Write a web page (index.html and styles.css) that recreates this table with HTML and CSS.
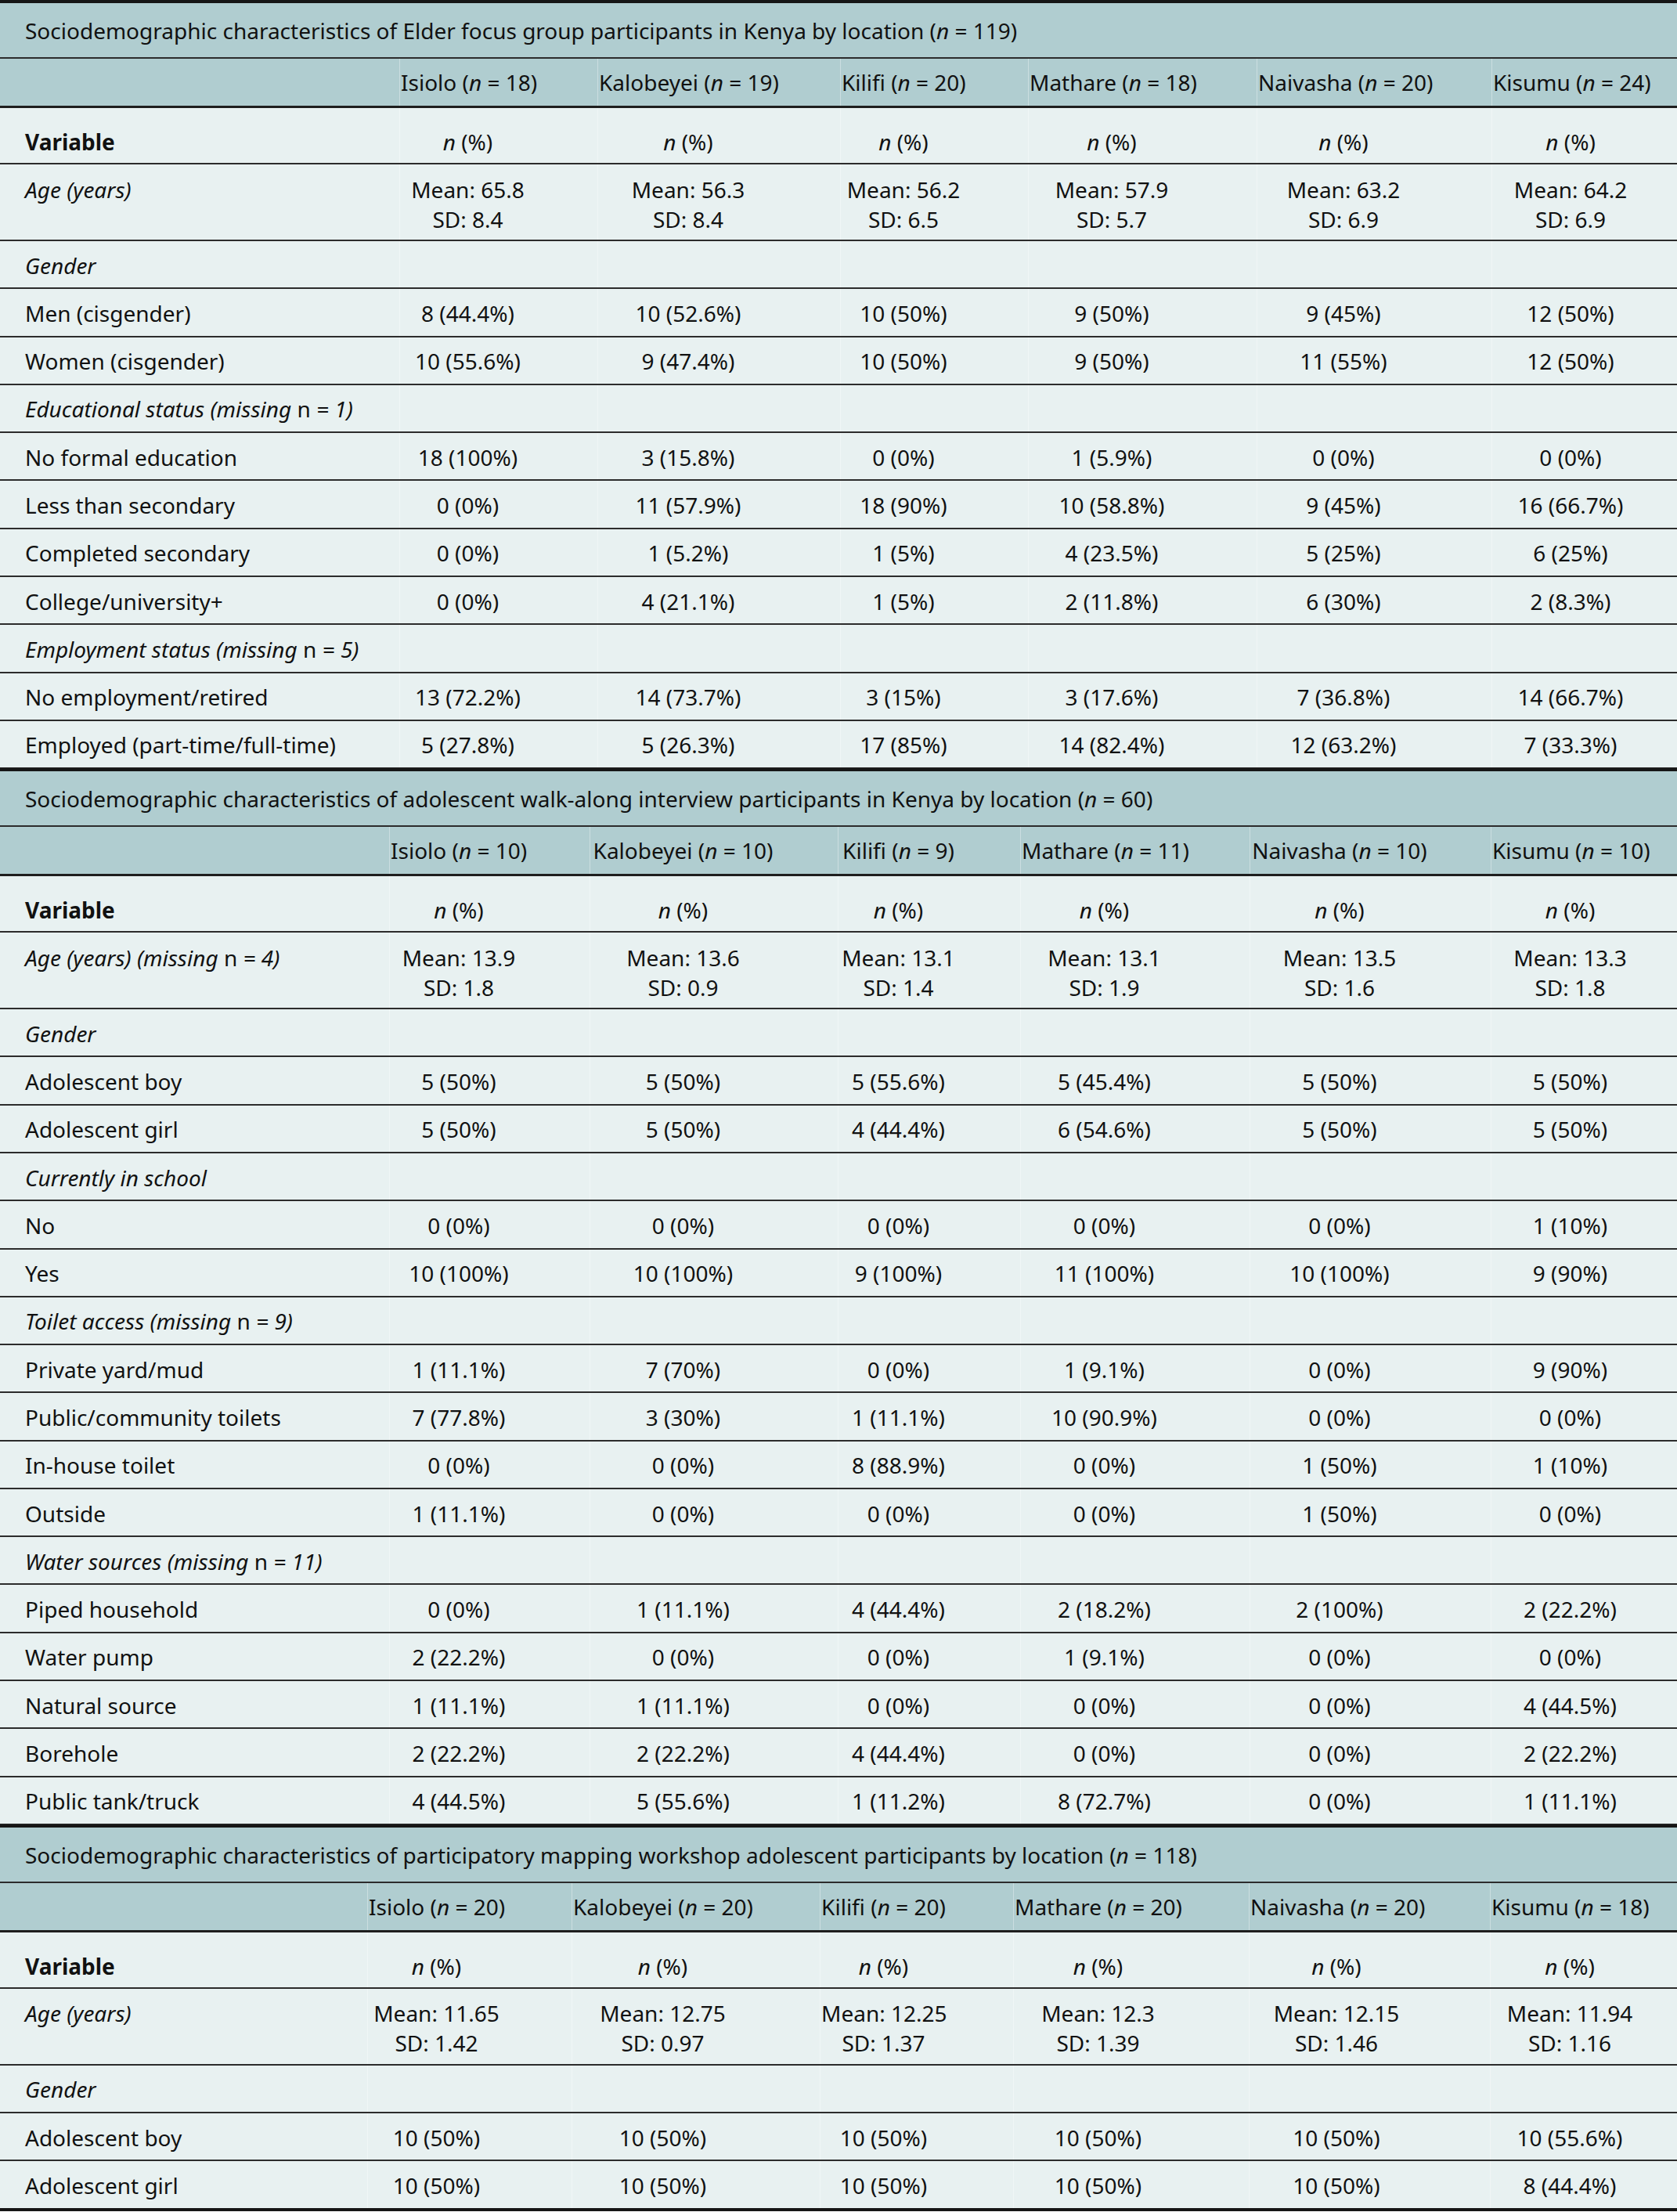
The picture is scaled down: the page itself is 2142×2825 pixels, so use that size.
FILE: index.html
```html
<!DOCTYPE html>
<html lang="en">
<head>
<meta charset="utf-8">
<title>Sociodemographic characteristics</title>
<link rel="stylesheet" href="styles.css">
</head>
<body>
<table class="tbl t1">
<colgroup><col class="k0"><col class="k1"><col class="k2"><col class="k3"><col class="k4"><col class="k5"><col class="k6"></colgroup>
<tr><td class="cap" colspan="7">Sociodemographic characteristics of Elder focus group participants in Kenya by location (<i>n</i> = 119)</td></tr>
<tr class="head"><th class="lab"></th><th>Isiolo (<i>n</i> = 18)</th><th>Kalobeyei (<i>n</i> = 19)</th><th>Kilifi (<i>n</i> = 20)</th><th>Mathare (<i>n</i> = 18)</th><th>Naivasha (<i>n</i> = 20)</th><th class="end">Kisumu (<i>n</i> = 24)</th></tr>
<tr class="var"><td class="lab"><b>Variable</b></td><td><i>n</i> (%)</td><td><i>n</i> (%)</td><td><i>n</i> (%)</td><td><i>n</i> (%)</td><td><i>n</i> (%)</td><td class="end"><i>n</i> (%)</td></tr>
<tr class="two"><td class="lab"><i>Age (years)</i></td><td>Mean: 65.8<br>SD: 8.4</td><td>Mean: 56.3<br>SD: 8.4</td><td>Mean: 56.2<br>SD: 6.5</td><td>Mean: 57.9<br>SD: 5.7</td><td>Mean: 63.2<br>SD: 6.9</td><td class="end">Mean: 64.2<br>SD: 6.9</td></tr>
<tr><td class="lab"><i>Gender</i></td><td></td><td></td><td></td><td></td><td></td><td class="end"></td></tr>
<tr><td class="lab">Men (cisgender)</td><td>8 (44.4%)</td><td>10 (52.6%)</td><td>10 (50%)</td><td>9 (50%)</td><td>9 (45%)</td><td class="end">12 (50%)</td></tr>
<tr><td class="lab">Women (cisgender)</td><td>10 (55.6%)</td><td>9 (47.4%)</td><td>10 (50%)</td><td>9 (50%)</td><td>11 (55%)</td><td class="end">12 (50%)</td></tr>
<tr><td class="lab"><i>Educational status (missing </i>n<i> = 1)</i></td><td></td><td></td><td></td><td></td><td></td><td class="end"></td></tr>
<tr><td class="lab">No formal education</td><td>18 (100%)</td><td>3 (15.8%)</td><td>0 (0%)</td><td>1 (5.9%)</td><td>0 (0%)</td><td class="end">0 (0%)</td></tr>
<tr><td class="lab">Less than secondary</td><td>0 (0%)</td><td>11 (57.9%)</td><td>18 (90%)</td><td>10 (58.8%)</td><td>9 (45%)</td><td class="end">16 (66.7%)</td></tr>
<tr><td class="lab">Completed secondary</td><td>0 (0%)</td><td>1 (5.2%)</td><td>1 (5%)</td><td>4 (23.5%)</td><td>5 (25%)</td><td class="end">6 (25%)</td></tr>
<tr><td class="lab">College/university+</td><td>0 (0%)</td><td>4 (21.1%)</td><td>1 (5%)</td><td>2 (11.8%)</td><td>6 (30%)</td><td class="end">2 (8.3%)</td></tr>
<tr><td class="lab"><i>Employment status (missing </i>n<i> = 5)</i></td><td></td><td></td><td></td><td></td><td></td><td class="end"></td></tr>
<tr><td class="lab">No employment/retired</td><td>13 (72.2%)</td><td>14 (73.7%)</td><td>3 (15%)</td><td>3 (17.6%)</td><td>7 (36.8%)</td><td class="end">14 (66.7%)</td></tr>
<tr class="last"><td class="lab">Employed (part-time/full-time)</td><td>5 (27.8%)</td><td>5 (26.3%)</td><td>17 (85%)</td><td>14 (82.4%)</td><td>12 (63.2%)</td><td class="end">7 (33.3%)</td></tr>
</table>

<table class="tbl t2">
<colgroup><col class="k0"><col class="k1"><col class="k2"><col class="k3"><col class="k4"><col class="k5"><col class="k6"></colgroup>
<tr><td class="cap" colspan="7">Sociodemographic characteristics of adolescent walk-along interview participants in Kenya by location (<i>n</i> = 60)</td></tr>
<tr class="head"><th class="lab"></th><th>Isiolo (<i>n</i> = 10)</th><th>Kalobeyei (<i>n</i> = 10)</th><th>Kilifi (<i>n</i> = 9)</th><th>Mathare (<i>n</i> = 11)</th><th>Naivasha (<i>n</i> = 10)</th><th class="end">Kisumu (<i>n</i> = 10)</th></tr>
<tr class="var"><td class="lab"><b>Variable</b></td><td><i>n</i> (%)</td><td><i>n</i> (%)</td><td><i>n</i> (%)</td><td><i>n</i> (%)</td><td><i>n</i> (%)</td><td class="end"><i>n</i> (%)</td></tr>
<tr class="two"><td class="lab"><i>Age (years) (missing </i>n<i> = 4)</i></td><td>Mean: 13.9<br>SD: 1.8</td><td>Mean: 13.6<br>SD: 0.9</td><td>Mean: 13.1<br>SD: 1.4</td><td>Mean: 13.1<br>SD: 1.9</td><td>Mean: 13.5<br>SD: 1.6</td><td class="end">Mean: 13.3<br>SD: 1.8</td></tr>
<tr><td class="lab"><i>Gender</i></td><td></td><td></td><td></td><td></td><td></td><td class="end"></td></tr>
<tr><td class="lab">Adolescent boy</td><td>5 (50%)</td><td>5 (50%)</td><td>5 (55.6%)</td><td>5 (45.4%)</td><td>5 (50%)</td><td class="end">5 (50%)</td></tr>
<tr><td class="lab">Adolescent girl</td><td>5 (50%)</td><td>5 (50%)</td><td>4 (44.4%)</td><td>6 (54.6%)</td><td>5 (50%)</td><td class="end">5 (50%)</td></tr>
<tr><td class="lab"><i>Currently in school</i></td><td></td><td></td><td></td><td></td><td></td><td class="end"></td></tr>
<tr><td class="lab">No</td><td>0 (0%)</td><td>0 (0%)</td><td>0 (0%)</td><td>0 (0%)</td><td>0 (0%)</td><td class="end">1 (10%)</td></tr>
<tr><td class="lab">Yes</td><td>10 (100%)</td><td>10 (100%)</td><td>9 (100%)</td><td>11 (100%)</td><td>10 (100%)</td><td class="end">9 (90%)</td></tr>
<tr><td class="lab"><i>Toilet access (missing </i>n<i> = 9)</i></td><td></td><td></td><td></td><td></td><td></td><td class="end"></td></tr>
<tr><td class="lab">Private yard/mud</td><td>1 (11.1%)</td><td>7 (70%)</td><td>0 (0%)</td><td>1 (9.1%)</td><td>0 (0%)</td><td class="end">9 (90%)</td></tr>
<tr><td class="lab">Public/community toilets</td><td>7 (77.8%)</td><td>3 (30%)</td><td>1 (11.1%)</td><td>10 (90.9%)</td><td>0 (0%)</td><td class="end">0 (0%)</td></tr>
<tr><td class="lab">In-house toilet</td><td>0 (0%)</td><td>0 (0%)</td><td>8 (88.9%)</td><td>0 (0%)</td><td>1 (50%)</td><td class="end">1 (10%)</td></tr>
<tr><td class="lab">Outside</td><td>1 (11.1%)</td><td>0 (0%)</td><td>0 (0%)</td><td>0 (0%)</td><td>1 (50%)</td><td class="end">0 (0%)</td></tr>
<tr><td class="lab"><i>Water sources (missing </i>n<i> = 11)</i></td><td></td><td></td><td></td><td></td><td></td><td class="end"></td></tr>
<tr><td class="lab">Piped household</td><td>0 (0%)</td><td>1 (11.1%)</td><td>4 (44.4%)</td><td>2 (18.2%)</td><td>2 (100%)</td><td class="end">2 (22.2%)</td></tr>
<tr><td class="lab">Water pump</td><td>2 (22.2%)</td><td>0 (0%)</td><td>0 (0%)</td><td>1 (9.1%)</td><td>0 (0%)</td><td class="end">0 (0%)</td></tr>
<tr><td class="lab">Natural source</td><td>1 (11.1%)</td><td>1 (11.1%)</td><td>0 (0%)</td><td>0 (0%)</td><td>0 (0%)</td><td class="end">4 (44.5%)</td></tr>
<tr><td class="lab">Borehole</td><td>2 (22.2%)</td><td>2 (22.2%)</td><td>4 (44.4%)</td><td>0 (0%)</td><td>0 (0%)</td><td class="end">2 (22.2%)</td></tr>
<tr class="last"><td class="lab">Public tank/truck</td><td>4 (44.5%)</td><td>5 (55.6%)</td><td>1 (11.2%)</td><td>8 (72.7%)</td><td>0 (0%)</td><td class="end">1 (11.1%)</td></tr>
</table>

<table class="tbl t3">
<colgroup><col class="k0"><col class="k1"><col class="k2"><col class="k3"><col class="k4"><col class="k5"><col class="k6"></colgroup>
<tr><td class="cap" colspan="7">Sociodemographic characteristics of participatory mapping workshop adolescent participants by location (<i>n</i> = 118)</td></tr>
<tr class="head"><th class="lab"></th><th>Isiolo (<i>n</i> = 20)</th><th>Kalobeyei (<i>n</i> = 20)</th><th>Kilifi (<i>n</i> = 20)</th><th>Mathare (<i>n</i> = 20)</th><th>Naivasha (<i>n</i> = 20)</th><th class="end">Kisumu (<i>n</i> = 18)</th></tr>
<tr class="var"><td class="lab"><b>Variable</b></td><td><i>n</i> (%)</td><td><i>n</i> (%)</td><td><i>n</i> (%)</td><td><i>n</i> (%)</td><td><i>n</i> (%)</td><td class="end"><i>n</i> (%)</td></tr>
<tr class="two"><td class="lab"><i>Age (years)</i></td><td>Mean: 11.65<br>SD: 1.42</td><td>Mean: 12.75<br>SD: 0.97</td><td>Mean: 12.25<br>SD: 1.37</td><td>Mean: 12.3<br>SD: 1.39</td><td>Mean: 12.15<br>SD: 1.46</td><td class="end">Mean: 11.94<br>SD: 1.16</td></tr>
<tr><td class="lab"><i>Gender</i></td><td></td><td></td><td></td><td></td><td></td><td class="end"></td></tr>
<tr><td class="lab">Adolescent boy</td><td>10 (50%)</td><td>10 (50%)</td><td>10 (50%)</td><td>10 (50%)</td><td>10 (50%)</td><td class="end">10 (55.6%)</td></tr>
<tr class="last"><td class="lab">Adolescent girl</td><td>10 (50%)</td><td>10 (50%)</td><td>10 (50%)</td><td>10 (50%)</td><td>10 (50%)</td><td class="end">8 (44.4%)</td></tr>
</table>
</body>
</html>
```

FILE: styles.css
```css
html, body {
  margin: 0;
  padding: 0;
  background: #ffffff;
}

body {
  font-family: "Noto Sans", "Open Sans", sans-serif;
  font-size: 28px;
  color: #111111;
}

.tbl {
  width: 2142px;
  table-layout: fixed;
  border-collapse: separate;
  border-spacing: 0;
  border-top: 4px solid #161616;
  background: #e8f1f1;
}

.tbl td,
.tbl th {
  padding: 11.6px 80px 9.7px 2px;
  line-height: 38px;
  text-align: center;
  vertical-align: top;
  white-space: nowrap;
  font-weight: normal;
  border-bottom: 2px solid #2c2c2c;
  box-shadow: inset 1px 0 0 rgba(255, 255, 255, 0.35);
}

.tbl .end {
  padding-right: 37px;
}

.tbl .lab {
  text-align: left;
  padding-left: 32px;
  padding-right: 8px;
  box-shadow: none;
}

.tbl .cap {
  background: #b0cdd0;
  text-align: left;
  padding: 16px 32px 15px;
  box-shadow: none;
}

.head th {
  background: #b0cdd0;
  padding-top: 11px;
  padding-bottom: 11px;
  border-bottom: 3px solid #1e1e1e;
}

.var td {
  padding-top: 24px;
  padding-bottom: 8px;
}

.var b {
  font-weight: 700;
}

.two td {
  padding-top: 12.5px;
  padding-bottom: 7.5px;
}

.last td {
  border-bottom-width: 1px;
}

.t3 .last td {
  border-bottom: 4px solid #161616;
}

.t1 .k0 { width: 510px; }
.t1 .k1 { width: 253px; }
.t1 .k2 { width: 310px; }
.t1 .k3 { width: 240px; }
.t1 .k4 { width: 292px; }
.t1 .k5 { width: 300px; }
.t1 .k6 { width: 237px; }

.t2 .k0 { width: 497px; }
.t2 .k1 { width: 256px; }
.t2 .k2 { width: 317px; }
.t2 .k3 { width: 233px; }
.t2 .k4 { width: 293px; }
.t2 .k5 { width: 308px; }
.t2 .k6 { width: 238px; }

.t3 .k0 { width: 469px; }
.t3 .k1 { width: 261px; }
.t3 .k2 { width: 317px; }
.t3 .k3 { width: 247px; }
.t3 .k4 { width: 301px; }
.t3 .k5 { width: 308px; }
.t3 .k6 { width: 239px; }

.t3 td,
.t3 th {
  padding-right: 86px;
}
```
